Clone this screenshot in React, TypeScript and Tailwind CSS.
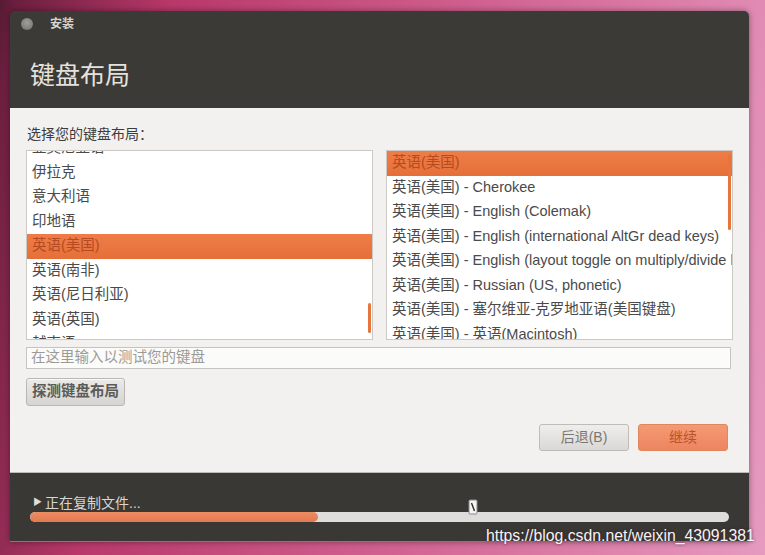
const FONT = "font-['Liberation_Sans','Noto_Sans_CJK_SC',sans-serif]";

const LEFT_ROWS = [
  "亚美尼亚语",
  "伊拉克",
  "意大利语",
  "印地语",
  "英语(美国)",
  "英语(南非)",
  "英语(尼日利亚)",
  "英语(英国)",
  "越南语",
];

const RIGHT_ROWS = [
  "英语(美国)",
  "英语(美国) - Cherokee",
  "英语(美国) - English (Colemak)",
  "英语(美国) - English (international AltGr dead keys)",
  "英语(美国) - English (layout toggle on multiply/divide key)",
  "英语(美国) - Russian (US, phonetic)",
  "英语(美国) - 塞尔维亚-克罗地亚语(美国键盘)",
  "英语(美国) - 英语(Macintosh)",
];

function ListRow({ label, selected }: { label: string; selected: boolean }) {
  return (
    <div
      className={[
        "flex h-[24.5px] shrink-0 items-center overflow-hidden whitespace-nowrap pl-[5px] text-[14.5px]",
        selected
          ? "bg-[linear-gradient(#ef7d47,#e56f39)] text-[#b44b22]"
          : "text-[#4a4a4a]",
      ].join(" ")}
    >
      {label}
    </div>
  );
}

function MouseCursor() {
  return (
    <svg width="11" height="17" viewBox="0 0 11 17" className="absolute left-[468px] top-[499px]">
      <rect x="1" y="1" width="8" height="14" rx="1" fill="#f4f4f4" stroke="#8a8a8a" strokeWidth="1" />
      <path d="M3.5 4 L6.5 12" stroke="#2a2a2a" strokeWidth="1.4" />
    </svg>
  );
}

export default function App() {
  return (
    <div
      className={`relative h-[555px] w-[765px] overflow-hidden bg-[linear-gradient(100deg,#561a33_0%,#6d1f40_2%,#b8386a_20%,#d0608f_55%,#e69ac0_100%)] ${FONT}`}
    >
      <div className="ml-[10px] mt-[11px] flex h-[531px] w-[739px] flex-col overflow-hidden rounded-t-[5px] shadow-[0_0_6px_rgba(0,0,0,0.4)]">
        {/* header */}
        <div className="flex h-[97px] shrink-0 flex-col bg-[#3b3a36] pl-[11px] pt-[7px]">
          <div className="flex h-[12px] items-center gap-[17px]">
            <span className="h-[12px] w-[12px] rounded-full bg-[radial-gradient(circle_at_50%_40%,#a09f9b,#6e6d69)]" />
            <span className="text-[12px] font-bold text-[#d6d4cf]">安装</span>
          </div>
          <div className="ml-[9px] mt-[30px] text-[25px] leading-[30px] text-[#e4e2de]">键盘布局</div>
        </div>

        {/* body */}
        <div className="flex h-[365px] shrink-0 flex-col border-b border-[#bdbbb7] bg-[#f2f1ef] px-[16px] pt-[17px]">
          <div className="h-[18px] pl-[1px] text-[14px] leading-[18px] text-[#3c3c3c]">选择您的键盘布局：</div>

          <div className="mt-[7px] flex h-[190px] gap-[13px]">
            <div className="relative h-full w-[347px] overflow-hidden border border-[#cbc9c4] bg-white">
              <div className="-mt-[15px] flex flex-col">
                {LEFT_ROWS.map((row, i) => (
                  <ListRow key={row + i} label={row} selected={i === 4} />
                ))}
              </div>
              <div className="absolute right-[1px] top-[152px] h-[30px] w-[3px] rounded-full bg-[#e8743e]" />
            </div>
            <div className="relative h-full w-[347px] overflow-hidden border border-[#cbc9c4] bg-white">
              <div className="flex flex-col">
                {RIGHT_ROWS.map((row, i) => (
                  <ListRow key={row} label={row} selected={i === 0} />
                ))}
              </div>
              <div className="absolute right-[1px] top-[3px] h-[76px] w-[3px] rounded-full bg-[#e8743e]" />
            </div>
          </div>

          <div className="mr-[2px] mt-[7px] flex h-[22px] items-center border border-[#c6c4bf] bg-[#fbfbfa] pl-[4px] text-[14.5px] text-[#9c9a96]">
            在这里输入以测试您的键盘
          </div>

          <div className="mt-[9px] flex">
            <button className="flex h-[28px] w-[99px] items-center justify-center rounded-[3px] border border-[#b9b7b2] bg-[linear-gradient(#ebeae8,#d5d4d1)] text-[14.5px] font-bold text-[#5c5b58] shadow-[inset_0_1px_0_rgba(255,255,255,0.7)]">
              探测键盘布局
            </button>
          </div>

          <div className="mr-[5px] mt-[18px] flex justify-end gap-[9px]">
            <button className="flex h-[27px] w-[90px] items-center justify-center rounded-[3px] border border-[#bebcb8] bg-[linear-gradient(#efeeec,#d9d8d5)] text-[14px] text-[#7a7874]">
              后退(B)
            </button>
            <button className="flex h-[27px] w-[90px] items-center justify-center rounded-[3px] border border-[#e0875f] bg-[linear-gradient(#f59a74,#ec8560)] text-[14px] text-[#b9532c]">
              继续
            </button>
          </div>
        </div>

        {/* footer */}
        <div className="flex flex-1 flex-col border-b border-[#7d7c78] bg-[#393834] pl-[20px] pt-[21px]">
          <div className="flex h-[18px] items-center gap-[3px] pl-[3px] text-[14px] text-[#d8d6d2]">
            <span className="text-[9px] text-[#e0ded9]">▶</span>
            <span>正在复制文件...</span>
          </div>
          <div className="h-[10px] w-[699px] overflow-hidden rounded-full bg-[#dedddb]">
            <div className="h-full w-[288px] rounded-full bg-[linear-gradient(#ee8c64,#e4784f)]" />
          </div>
        </div>
      </div>

      <MouseCursor />

      <div className="absolute left-[486px] top-[526px] text-[15.8px] leading-[19px] text-[#f4f4f4] [text-shadow:0_0_3px_rgba(60,20,40,0.8)]">
        https://blog.csdn.net/weixin_43091381
      </div>
    </div>
  );
}
